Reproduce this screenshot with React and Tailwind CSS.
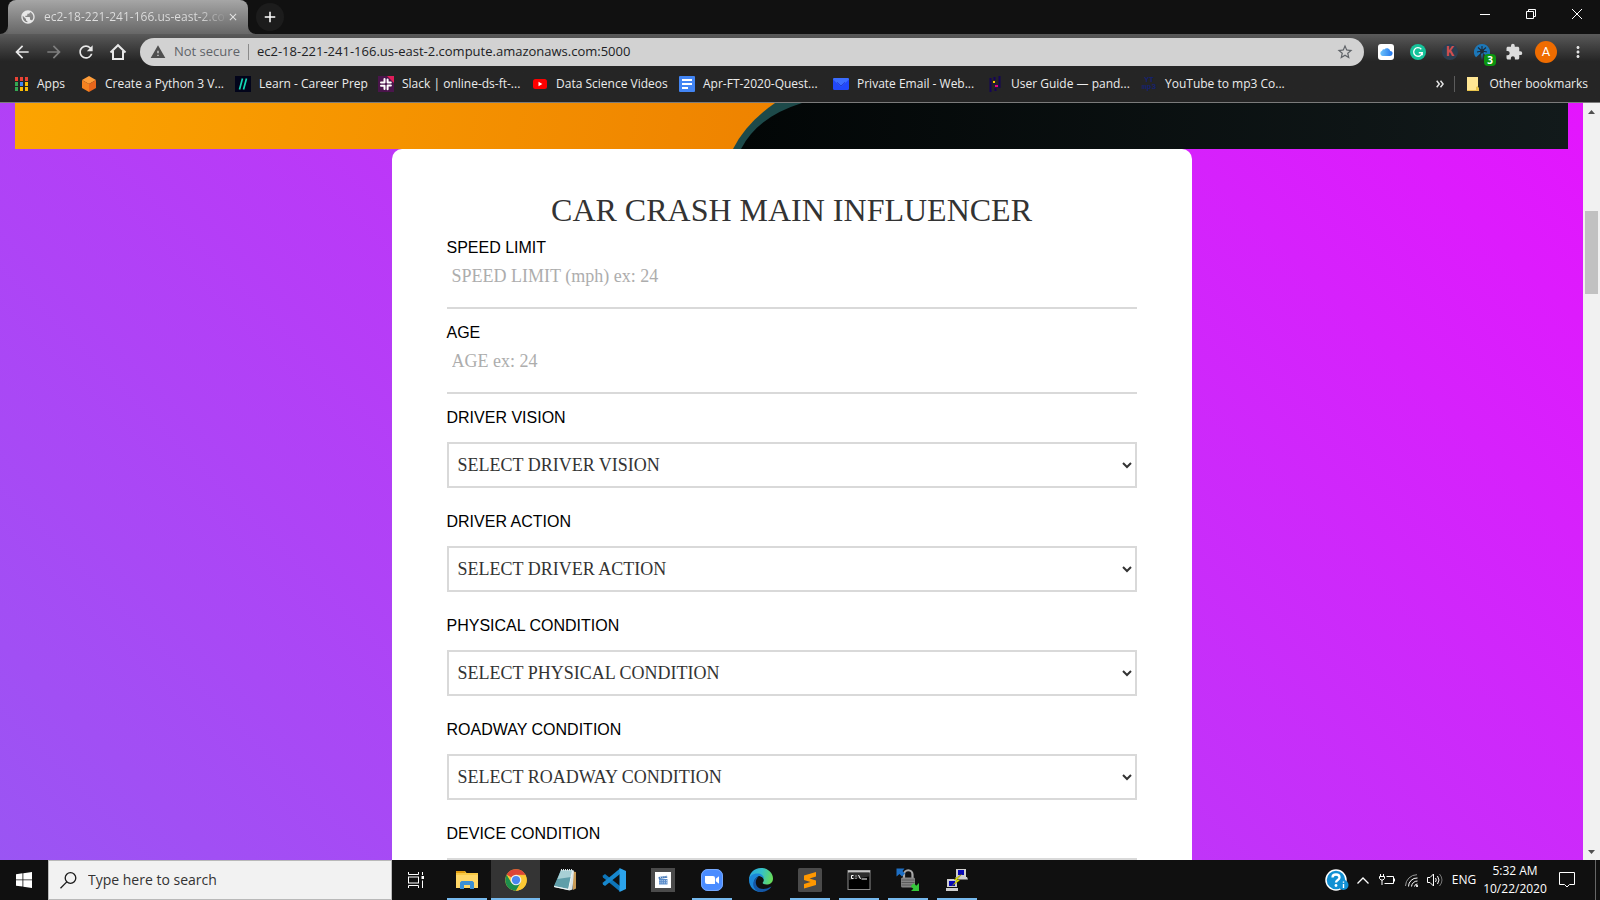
import React from "react";
import {
  MdArrowBack,
  MdArrowForward,
  MdRefresh,
  MdWarning,
  MdStarBorder,
  MdExtension,
  MdMoreVert,
  MdClose,
  MdAdd,
  MdPublic,
} from "react-icons/md";

/* ---------- bookmark icons ---------- */
const AppsIcon = () => (
  <svg width="16" height="16" viewBox="0 0 16 16">
    {["#ea4335", "#ea4335", "#ea4335", "#34a853", "#4285f4", "#fbbc05", "#34a853", "#fbbc05", "#fbbc05"].map((c, i) => (
      <rect key={i} x={2 + (i % 3) * 5} y={1 + Math.floor(i / 3) * 5} width="3" height="4" fill={c} />
    ))}
  </svg>
);
const CubeIcon = () => (
  <svg width="16" height="16" viewBox="0 0 16 16">
    <path d="M8 0 15 4 8 8 1 4z" fill="#ff9d3a" />
    <path d="M1 4 8 8v8l-7-4z" fill="#f58220" />
    <path d="M15 4 8 8v8l7-4z" fill="#e8661b" />
  </svg>
);
const LearnIcon = () => (
  <svg width="16" height="16" viewBox="0 0 16 16">
    <rect width="16" height="16" fill="#02041a" />
    <path d="M7.500 2.500 4.500 13.500M11.500 2.500 8.500 13.500" stroke="#13d8b5" strokeWidth="1.700" />
  </svg>
);
const SlackIcon = () => (
  <svg width="16" height="16" viewBox="0 0 16 16">
    <rect width="16" height="16" fill="#4a154b" />
    <path d="M9 0h7v7z" fill="#e01e5a" />
    <g stroke="#fff" strokeWidth="2" strokeLinecap="round">
      <path d="M6.500 3v3.500M3 6.500h3.400M9.600 3.500v3M9.600 6.500h3.200M6.500 9.700v3.200M3 9.700h3M9.600 9.600v3.700M9.600 9.600h3.300" />
    </g>
    <rect x="7.500" y="7.500" width="1" height="1" fill="#4a154b" />
  </svg>
);
const YoutubeIcon = () => (
  <svg width="16" height="16" viewBox="0 0 16 16">
    <rect x="1" y="3" width="14" height="10" rx="2.500" fill="#f00" />
    <path d="M6.500 5.800v4.400L10.300 8z" fill="#fff" />
  </svg>
);
const DocsIcon = () => (
  <svg width="16" height="16" viewBox="0 0 16 16">
    <rect width="16" height="16" rx="1" fill="#4285f4" />
    <path d="M3 4h10M3 8h10M3 12h6" stroke="#fff" strokeWidth="2" />
  </svg>
);
const MailIcon = () => (
  <svg width="16" height="16" viewBox="0 0 16 16">
    <rect y="2" width="16" height="12" rx="1.500" fill="#2148fb" />
    <path d="M0 3.500C0 2.500.600 2 1.500 2h13c.900 0 1.500.500 1.500 1.500L8.800 10q-.800.700-1.600 0z" fill="#3c6dff" />
    <path d="M4 6.300 8 10l4-3.700" stroke="#1a2fc4" fill="none" strokeWidth=".800" />
  </svg>
);
const PandasIcon = () => (
  <svg width="16" height="16" viewBox="0 0 16 16">
    <path d="M3.500 2v14M12.500 0v12" stroke="#150458" strokeWidth="2" />
    <path d="M7.500 1v3M8.500 12v3M7.500 7.500v1" stroke="#150458" strokeWidth="2" />
    <rect x="6" y="5" width="2" height="2" fill="#ffca00" />
    <rect x="8" y="9" width="3" height="2" fill="#e70488" />
  </svg>
);
const Mp3Icon = () => (
  <span className="flex h-4 w-4 flex-col items-center font-['Liberation_Mono',monospace] text-[8px] leading-[7px] font-bold text-[#16226f]">
    <span>YT</span>
    <span>mp3</span>
  </span>
);
const FolderIcon = () => (
  <svg width="16" height="16" viewBox="0 0 16 16">
    <path d="M2 1h11v10l1 1v3H2z" fill="#ffe694" />
    <path d="M11 15v-4l2-1v2h1v3z" fill="#e9c44c" />
    <path d="M2 14.500h12" stroke="#e9c44c" />
  </svg>
);

const bookmarks = [
  ["Apps", AppsIcon, "w-[68px]"],
  ["Create a Python 3 V...", CubeIcon, "w-[154px]"],
  ["Learn - Career Prep", LearnIcon, "w-[143px]"],
  ["Slack | online-ds-ft-...", SlackIcon, "w-[154px]"],
  ["Data Science Videos", YoutubeIcon, "w-[147px]"],
  ["Apr-FT-2020-Quest...", DocsIcon, "w-[154px]"],
  ["Private Email - Web...", MailIcon, "w-[154px]"],
  ["User Guide — pand...", PandasIcon, "w-[154px]"],
  ["YouTube to mp3 Co...", Mp3Icon, "w-[154px]"],
];

/* ---------- extension icons ---------- */
const CloudExt = () => (
  <svg width="16" height="16" viewBox="0 0 16 16">
    <defs>
      <linearGradient id="cloud" x1="0" x2="1">
        <stop offset="0" stopColor="#6cc3fb" />
        <stop offset="1" stopColor="#2476ec" />
      </linearGradient>
    </defs>
    <rect width="16" height="16" rx="3" fill="#fff" />
    <path d="M4.500 12a2.700 2.700 0 0 1-.400-5.200A2 2 0 0 1 6.300 5.400 3.400 3.400 0 0 1 12.200 7a2.500 2.500 0 0 1-.200 5z" fill="url(#cloud)" />
  </svg>
);
const GExt = () => (
  <svg width="16" height="16" viewBox="0 0 16 16">
    <circle cx="8" cy="8" r="8" fill="#15c39a" />
    <path d="M11.300 5.200A4.300 4.300 0 1 0 12.200 8.800H8.800M12.200 8.500v2.800" stroke="#fff" strokeWidth="1.400" fill="none" />
  </svg>
);
const KExt = () => (
  <span className="flex h-4 w-4 items-center justify-center rounded-full bg-[#2c3e50] font-['Liberation_Mono',monospace] text-[14px] leading-4 font-bold text-[#cf4f4f]">
    K
  </span>
);
const WheelExt = () => (
  <span className="relative block h-4 w-4">
    <svg width="16" height="16" viewBox="0 0 16 16">
      <path d="M8 0a8 8 0 0 1 6 13.300L9 9 8 16 7 9l-5 4.300A8 8 0 0 1 8 0z" fill="#1c77b8" />
      <g stroke="#1e2a36" strokeWidth="1.100">
        <path d="M8 7 4 3.500M8 7V2M8 7l4-3.500M8 7l5 1M8 7 3 8M8 8l-3 4" />
      </g>
      <circle cx="8" cy="7.500" r="2" fill="#1e2a36" />
    </svg>
    <span className="absolute top-[10px] left-[10px] flex h-3 w-3 items-center justify-center rounded-sm bg-[#0b9410] text-[10px] leading-3 font-bold text-white">
      3
    </span>
  </span>
);

/* ---------- taskbar icons ---------- */
const WindowsLogo = () => (
  <svg width="16" height="16" viewBox="0 0 16 16" fill="#fff">
    <path d="M0 2.200 6.500 1.300v6.200H0zM7.300 1.200 16 0v7.500H7.300zM0 8.300h6.500v6.300L0 13.700zM7.300 8.300H16V16l-8.700-1.200z" />
  </svg>
);
const TaskView = () => (
  <svg width="16" height="16" viewBox="0 0 16 16" stroke="#fff" fill="none">
    <path d="M.500 0v2.500h10V0M.500 16v-2.500h10V16" />
    <rect x=".500" y="5" width="10" height="6" />
    <path d="M14.500 0v3M14.500 8.500V16" />
    <rect x="14" y="4.500" width="1.500" height="2" fill="#fff" />
  </svg>
);
const Explorer = () => (
  <svg width="22" height="20" viewBox="0 0 22 20">
    <path d="M0 1h9l1.500 2H22v15H0z" fill="#f8c945" />
    <path d="M0 1h8.500l1 2H0z" fill="#e09b10" />
    <path d="M0 5h22v13H0z" fill="#ffd767" />
    <path d="M4 19v-6.500L5.500 11h11l1.500 1.500V19h-4v-4H8v4z" fill="#3b8fd4" />
  </svg>
);
const Chrome = () => (
  <svg width="22" height="22" viewBox="0 0 48 48">
    <circle cx="24" cy="24" r="23.500" fill="#fcc934" />
    <path d="M24 24 3.600 12.300A23.500 23.500 0 0 1 44.400 12.300H24z" fill="#dc4437" />
    <path d="M3.600 12.300A23.500 23.500 0 0 0 24 47.500L34.200 30 24 24 13.900 30z" fill="#1e8e4c" />
    <path d="M44.400 12.300A23.500 23.500 0 0 1 24 47.500L34.200 30 34 15z" fill="#fcc934" />
    <path d="M24 12.300h20.400" stroke="#dc4437" />
    <circle cx="24" cy="24" r="11.700" fill="#eee" />
    <circle cx="24" cy="24" r="9" fill="#4a86f0" />
  </svg>
);
const Notepad = () => (
  <svg width="24" height="24" viewBox="0 0 24 24">
    <path d="M20 3.500 23 4v16.500l-3 1.500z" fill="#c79a55" />
    <path d="M8.500 2.500H21l-1.500 19-3 1L1 19z" fill="#d9e4e6" />
    <path d="M8 2h11.500l-4 19L1 18z" fill="#5f9ea9" />
    <path d="M8 2h11.500l-1.500 7L4.500 11z" fill="#a8d0d5" />
    <path d="M1 18.500 15.500 21.500l4-19" stroke="#eef6f7" fill="none" />
    <path d="M8 2h11.500" stroke="#dbe6e8" strokeWidth="2" strokeDasharray="1 1" />
  </svg>
);
const VsCode = () => (
  <svg width="24" height="24" viewBox="0 0 24 24">
    <path d="M1 7.500 3 6l15 12v5.500L1 9.500q-.800-1 0-2z" fill="#0e75b8" />
    <path d="M1 16.500 3 18 18 6V.500L1 14.500q-.800 1 0 2z" fill="#1787cd" />
    <path d="M17.500 0 24 3v18l-6.500 3z" fill="#2ba3ec" />
  </svg>
);
const Video = () => (
  <svg width="24" height="24" viewBox="0 0 24 24">
    <rect width="24" height="24" fill="#4b4b4b" />
    <rect x="4" y="4" width="16" height="16" fill="#fff" />
    <path d="m7.500 9 8.500-1.300.300 2-8.500 1.300z" fill="#4377b7" />
    <path d="M8 11h8.500v5.500H8z" fill="#5a8cca" />
    <path d="M8.500 12.700h8M8.500 14.800h8M9 9.500l7-1" stroke="#e8f0fa" strokeWidth=".800" strokeDasharray="1 1.200" />
  </svg>
);
const Zoom = () => (
  <svg width="24" height="24" viewBox="0 0 24 24">
    <rect x="1" y="1" width="22" height="22" rx="7" fill="#4a8cff" />
    <rect x="1.500" y="1.500" width="21" height="21" rx="6.500" fill="none" stroke="#77a9fb" />
    <path d="M5 8h8q2 0 2 2v6H7q-2 0-2-2zM15.800 10.800 19 8.200v7.600l-3.200-2.600z" fill="#fff" />
  </svg>
);
const Edge = () => (
  <svg width="24" height="24" viewBox="0 0 24 24">
    <defs>
      <linearGradient id="edgeTop" x1="0" x2="1" y1=".300" y2=".500">
        <stop offset="0" stopColor="#2aa9e0" />
        <stop offset=".500" stopColor="#35c1c8" />
        <stop offset="1" stopColor="#67dc58" />
      </linearGradient>
    </defs>
    <path d="M0 12C0 5 5 0 12 0s12 5 12 10.500c0 4-3 6-6.500 6-3 0-4.500-1-3.500-2.200C16 12 14 8 9.500 8 4 8 .500 10 0 12z" fill="url(#edgeTop)" />
    <path d="M0 12c0-4 4-6.500 8.500-6.500 4 0 6.500 2.500 6.500 5.500-1-2-3-3-5-3-4 2-6 5-4.500 9.500S11 24 12 24C5 24 0 18.500 0 12z" fill="#1b87d8" />
    <path d="M9.500 9C7 11 6 14 7.500 17.500S14 21.500 18 20.500l4.500-2C20.500 22 16.500 24 12 24c-5 0-9-5-7.500-10C5.500 11 7.500 9.300 9.500 9z" fill="#1457a6" />
  </svg>
);
const Sublime = () => (
  <svg width="24" height="24" viewBox="0 0 24 24">
    <rect width="24" height="24" rx="1.500" fill="#4a4a4a" />
    <path d="M18 4v4.500l-6.500 2L18 12.500V17L6 20.500V16l6.500-2L6 12V7.500z" fill="#ff9800" />
  </svg>
);
const Cmd = () => (
  <svg width="24" height="20" viewBox="0 0 24 20">
    <rect x="1" y=".500" width="22" height="19" fill="#000" stroke="#8b8b8b" />
    <path d="M1 1.500h22" stroke="#c5c5c5" strokeWidth="2" />
    <path d="M2 3h20v3.500L2 10z" fill="#2c2c2c" />
    <path d="M6.500 5.500h-2v3h2M11.500 5l2 4" stroke="#fff" fill="none" />
    <path d="M9 5.500v1M9 7.800v1M14.500 9H20" stroke="#fff" />
  </svg>
);
const Lock = () => (
  <svg width="24" height="24" viewBox="0 0 24 24">
    <path d="M8 11V6.500a4.200 4.200 0 0 1 8.500 0V11" stroke="#a8a8a8" strokeWidth="2.200" fill="none" />
    <rect x="5" y="9.500" width="14" height="10" rx="1.500" fill="#858585" />
    <path d="M5.500 12h13M5.500 14.500h13M5.500 17h13" stroke="#5a5a5a" />
    <path d="M.500.500h8L6.500 3 9 5.500 6 8.500 3.500 6 .500 8.500z" fill="#1d6fc4" />
    <path d="M23 23h-8l2.300-2.300-2.600-2.500 3-2.900 2.600 2.500L23 15z" fill="#35c83a" />
  </svg>
);
const Putty = () => (
  <svg width="24" height="24" viewBox="0 0 24 24">
    <path d="M11 1h10v8H11zM10 9h12l1 2.500H13zM2 11h10v8H2zM1 20h12v3H1z" fill="#cfcfcf" />
    <rect x="13" y="2" width="6" height="5" fill="#0808b8" />
    <rect x="4" y="13" width="6" height="5" fill="#0808b8" />
    <path d="m17 6-8 5.500 3 .800-5 5.500 8-5.500-3-.800z" fill="#f7f700" stroke="#555500" strokeWidth=".400" />
  </svg>
);

const taskApps = [
  ["File Explorer", Explorer, true],
  ["Google Chrome", Chrome, true, true],
  ["Notepad", Notepad, false],
  ["Visual Studio Code", VsCode, false],
  ["Video Editor", Video, false],
  ["Zoom", Zoom, true],
  ["Microsoft Edge", Edge, false],
  ["Sublime Text", Sublime, true],
  ["Command Prompt", Cmd, true],
  ["WinSCP", Lock, true],
  ["PuTTY", Putty, true],
];

const trayBtn = "flex h-full items-center justify-center";

/* ---------- browser chrome ---------- */
function TabStrip() {
  return (
    <div className="flex h-[34px] shrink-0 items-stretch bg-[#111] pl-2">
      <div className="relative flex w-60 items-center rounded-t-lg bg-linear-to-b from-[#a6a6a6] to-[#676767] pr-2 pl-3">
        <svg className="absolute bottom-0 -left-2" width="8" height="8" viewBox="0 0 8 8" fill="#676767">
          <path d="M8 0v8H0a8 8 0 0 0 8-8z" />
        </svg>
        <svg className="absolute -right-2 bottom-0" width="8" height="8" viewBox="0 0 8 8" fill="#676767">
          <path d="M0 0v8h8a8 8 0 0 1-8-8z" />
        </svg>
        <MdPublic className="size-4 shrink-0 text-[#e8e8e8]" />
        <span className="ml-2 flex-1 bg-linear-to-r from-[#dedede] from-85% to-[#8f8f8f] bg-clip-text text-xs whitespace-nowrap text-transparent">
          ec2-18-221-241-166.us-east-2.co
        </span>
        <button aria-label="Close tab" className="flex size-4 shrink-0 items-center justify-center text-[#e3e3e3]">
          <MdClose className="size-3" />
        </button>
      </div>
      <button aria-label="New tab" className="ml-2 flex size-7 items-center justify-center self-center rounded-full bg-[#1c1c1c] text-white">
        <MdAdd className="size-[18px]" />
      </button>
      <div className="ml-auto flex h-7">
        <button aria-label="Minimize" className="flex w-[46px] items-center justify-center">
          <svg width="10" height="10" stroke="#fff"><path d="M0 5.500h10" /></svg>
        </button>
        <button aria-label="Restore" className="flex w-[46px] items-center justify-center">
          <svg width="10" height="10" stroke="#fff" fill="none"><path d="M.500 2.500h7v7h-7zM2.500 2.500v-2h7v7h-2" /></svg>
        </button>
        <button aria-label="Close" className="flex w-[46px] items-center justify-center">
          <svg width="10" height="10" stroke="#fff"><path d="m0 0 10 10M10 0 0 10" /></svg>
        </button>
      </div>
    </div>
  );
}

function Toolbar() {
  const ext = "flex w-8 items-center justify-center";
  return (
    <div className="flex h-9 shrink-0 items-center px-1.5">
      <button aria-label="Back" className="flex w-8 justify-center text-[#e8e8e8]"><MdArrowBack className="size-5" /></button>
      <button aria-label="Forward" className="flex w-8 justify-center text-[#7e7e7e]"><MdArrowForward className="size-5" /></button>
      <button aria-label="Reload" className="flex w-8 justify-center text-[#e8e8e8]"><MdRefresh className="size-5" /></button>
      <button aria-label="Home" className="flex w-8 justify-center text-[#e8e8e8]">
        <svg width="18" height="18" viewBox="0 0 18 18" fill="none" stroke="currentColor" strokeWidth="2">
          <path d="M1.500 9.500 9 2.200l7.500 7.300M4 8v8h10V8" />
        </svg>
      </button>
      <div className="mx-1.5 flex h-7 flex-1 items-center rounded-full bg-[#d2d2d2] px-2.5">
        <MdWarning className="size-4 shrink-0 text-[#4f4f4f]" />
        <span className="ml-2 shrink-0 text-[13px] whitespace-nowrap text-[#5f6368]">Not secure</span>
        <span className="mx-2 h-4 w-px shrink-0 bg-[#8a8a8a]" />
        <input
          aria-label="Address"
          className="min-w-0 flex-1 bg-transparent text-[13px] text-[#202124] outline-none"
          defaultValue="ec2-18-221-241-166.us-east-2.compute.amazonaws.com:5000"
        />
        <button aria-label="Bookmark this page" className="text-[#5f6368]"><MdStarBorder className="size-[18px]" /></button>
      </div>
      <button aria-label="iCloud" className={ext}><CloudExt /></button>
      <button aria-label="Grammarly" className={ext}><GExt /></button>
      <button aria-label="K extension" className={ext}><KExt /></button>
      <button aria-label="Tracker extension" className={ext}><WheelExt /></button>
      <button aria-label="Extensions" className={ext}><MdExtension className="size-[18px] text-[#dcdcdc]" /></button>
      <button aria-label="Profile" className={ext}>
        <span className="flex size-[22px] items-center justify-center rounded-full bg-[#ef6c00] font-[Roboto,sans-serif] text-[13px] text-white">A</span>
      </button>
      <button aria-label="Menu" className={ext}><MdMoreVert className="size-[18px] text-[#e3e3e3]" /></button>
    </div>
  );
}

function BookmarksBar() {
  return (
    <div className="flex h-8 shrink-0 items-center pb-1 pl-[13px] text-xs text-[#ececec]">
      {bookmarks.map(([label, Icon, width]) => (
        <a key={label} href="#" className={`flex shrink-0 items-center gap-2 whitespace-nowrap ${width}`}>
          <Icon />
          <span>{label}</span>
        </a>
      ))}
      <button aria-label="More bookmarks" className="ml-auto">
        <svg width="8" height="8" viewBox="0 0 8 8" fill="none" stroke="#e3e3e3" strokeWidth="1.500"><path d="m.700.800 2.600 3.200-2.600 3.200M4.500.800 7.100 4 4.500 7.200" /></svg>
      </button>
      <span className="mx-2.5 h-4 w-px bg-[#5c5c5c]" />
      <a href="#" className="flex items-center gap-2 pr-3 whitespace-nowrap">
        <FolderIcon />
        <span>Other bookmarks</span>
      </a>
    </div>
  );
}

/* ---------- page ---------- */
function Banner() {
  return (
    <div className="mx-[15px] h-[46px] shrink-0 overflow-hidden">
      <svg className="block h-full w-full" viewBox="0 0 1553 46" preserveAspectRatio="none">
        <defs>
          <linearGradient id="orange" gradientUnits="userSpaceOnUse" x1="0" y1="0" x2="760" y2="120">
            <stop offset="0" stopColor="#fca400" />
            <stop offset="1" stopColor="#ee8200" />
          </linearGradient>
          <linearGradient id="dark" x1="0" x2="1">
            <stop offset="0" stopColor="#020606" />
            <stop offset="1" stopColor="#121a1b" />
          </linearGradient>
        </defs>
        <rect width="780" height="46" fill="url(#orange)" />
        <path d="M718 46Q731 20 760 0H1553V46z" fill="#1d4a4a" />
        <path d="M726 46Q742 14 787 0H1553V46z" fill="url(#dark)" />
      </svg>
    </div>
  );
}

const labelCls = "block font-['Liberation_Sans',Arial,sans-serif] text-base leading-6 text-black";

function TextField({ id, label, placeholder }) {
  return (
    <div className="mb-3">
      <label htmlFor={id} className={labelCls}>{label}</label>
      <input
        id={id}
        placeholder={placeholder}
        className="block h-[49px] w-full border-b-2 border-[#d9d9d9] bg-white px-[5px] pb-3.5 text-lg leading-5 text-[#333] outline-none placeholder:text-[#adadad]"
      />
    </div>
  );
}

function SelectField({ id, label, option }) {
  return (
    <div className="mb-[22px]">
      <label htmlFor={id} className={labelCls}>{label}</label>
      <select id={id} className="mt-3 block h-[46px] w-full border-2 border-[#d9d9d9] bg-white px-[5px] text-lg text-[#333]">
        <option>{option}</option>
      </select>
    </div>
  );
}

function FormCard() {
  return (
    <form className="mx-auto w-full max-w-[800px] shrink-0 rounded-[10px] bg-white px-[55px] pt-[45px] font-['Liberation_Serif','Times_New_Roman',serif]">
      <h1 className="mb-2.5 text-center text-[32px] leading-8 text-[#333]">CAR CRASH MAIN INFLUENCER</h1>
      <TextField id="speed" label="SPEED LIMIT" placeholder="SPEED LIMIT (mph) ex: 24" />
      <TextField id="age" label="AGE" placeholder="AGE ex: 24" />
      <SelectField id="vision" label="DRIVER VISION" option="SELECT DRIVER VISION" />
      <SelectField id="action" label="DRIVER ACTION" option="SELECT DRIVER ACTION" />
      <SelectField id="physical" label="PHYSICAL CONDITION" option="SELECT PHYSICAL CONDITION" />
      <SelectField id="roadway" label="ROADWAY CONDITION" option="SELECT ROADWAY CONDITION" />
      <SelectField id="device" label="DEVICE CONDITION" option="SELECT DEVICE CONDITION" />
    </form>
  );
}

function ScrollBar() {
  return (
    <div className="flex w-[17px] shrink-0 flex-col items-center bg-[#f1f1f1]">
      <svg width="17" height="17" viewBox="0 0 17 17"><path d="m5 11 3.500-4 3.500 4z" fill="#505050" /></svg>
      <div className="flex w-full flex-1 flex-col px-0.5">
        <div className="grow-[91]" />
        <div className="grow-[83] bg-[#c1c1c1]" />
        <div className="grow-[549]" />
      </div>
      <svg width="17" height="17" viewBox="0 0 17 17"><path d="m5 7 3.500 4L12 7z" fill="#505050" /></svg>
    </div>
  );
}

/* ---------- taskbar ---------- */
function Taskbar() {
  return (
    <div className="flex h-10 shrink-0 items-stretch bg-[#101010] text-white">
      <button aria-label="Start" className="flex w-12 items-center justify-center"><WindowsLogo /></button>
      <label className="flex w-[344px] items-center border border-[#b9b9b9] bg-[#f2f2f2] pl-[11px]">
        <svg width="17" height="17" viewBox="0 0 17 17" fill="none" stroke="#1b1b1b" strokeWidth="1.300">
          <circle cx="10.500" cy="6" r="5.300" />
          <path d="M6.800 9.900.500 16.300" />
        </svg>
        <input
          aria-label="Search"
          placeholder="Type here to search"
          className="ml-[11px] min-w-0 flex-1 bg-transparent text-sm outline-none placeholder:text-[#333]"
        />
      </label>
      <button aria-label="Task View" className="mr-0.5 flex w-12 items-center justify-center"><TaskView /></button>
      {taskApps.map(([name, Icon, running, active]) => (
        <button
          key={name}
          aria-label={name}
          className={`relative flex w-[49px] items-center justify-center ${active ? "bg-[#343434]" : ""}`}
        >
          <Icon />
          {running && <span className={`absolute bottom-0 h-0.5 bg-[#76b9ed] ${active ? "w-full" : "w-10"}`} />}
        </button>
      ))}
      <div className="ml-auto flex items-center">
        <button aria-label="Help" className={`${trayBtn} w-7`}>
          <svg width="24" height="24" viewBox="0 0 24 24">
            <circle cx="11" cy="12" r="10" fill="#1290d3" stroke="#fff" strokeWidth="1.500" />
            <path d="M7.500 9.500c0-4 7-4 7 0 0 2.500-3.500 2.500-3.500 5" stroke="#fff" strokeWidth="2.300" fill="none" />
            <circle cx="11" cy="17.500" r="1.400" fill="#fff" />
            <circle cx="18.500" cy="17" r="5" fill="#1290d3" />
            <path d="M18.500 16v4M18.500 13.500v1.200" stroke="#fff" strokeWidth="1.400" />
          </svg>
        </button>
        <button aria-label="Show hidden icons" className={`${trayBtn} w-6`}>
          <svg width="12" height="7" fill="none" stroke="#fff" strokeWidth="1.300"><path d="m.500 6.500 5.500-5.500 5.500 5.500" /></svg>
        </button>
        <button aria-label="Battery" className={`${trayBtn} w-6`}>
          <svg width="16" height="12" fill="none" stroke="#fff">
            <path d="M7.500 2.500h7v7h-9M15.500 4.500v3M1.500 0v2M4.500 0v2M.500 2.500h5v2l-1.500 1.500H2L.500 4.500zM3 6v5" />
          </svg>
        </button>
        <button aria-label="Network" className={`${trayBtn} w-6`}>
          <svg width="13" height="13" viewBox="0 0 13 13" fill="none" stroke="#fff">
            <path d="M.500 12A11.500 11.500 0 0 1 12 .700" stroke="#999" />
            <path d="M3.500 12.500A8.500 8.500 0 0 1 12.500 4M6.500 12.500a6 6 0 0 1 6-5.500M9.500 12.500a3 3 0 0 1 3-2.500" />
            <circle cx="12" cy="12" r=".700" fill="#fff" />
          </svg>
        </button>
        <button aria-label="Volume" className={`${trayBtn} w-6`}>
          <svg width="16" height="14" viewBox="0 0 16 14" fill="none" stroke="#fff">
            <path d="M.500 4.500H3L6.500 1v12L3 9.500H.500zM8.500 5q1.500 2 0 4M10.500 3q3 4 0 8" />
            <path d="M12.500 1q5 6 0 12" stroke="#777" />
          </svg>
        </button>
        <span className="w-[34px] text-center text-xs">ENG</span>
        <span className="flex w-[68px] flex-col items-center text-xs leading-[18px] whitespace-nowrap">
          <span>5:32 AM</span>
          <span>10/22/2020</span>
        </span>
        <button aria-label="Notifications" className={`${trayBtn} mr-2.5 w-9`}>
          <svg width="16" height="16" viewBox="0 0 16 16" fill="none" stroke="#fff"><path d="M.500.500h15v12h-5L8 15l-2.500-2.500h-5z" /></svg>
        </button>
        <span className="mr-1 h-full w-px bg-[#666]" />
      </div>
    </div>
  );
}

export default function App() {
  return (
    <div className="flex h-screen flex-col overflow-hidden font-['Open_Sans','Segoe_UI',sans-serif]">
      <header>
        <TabStrip />
        <div className="border-b border-[#7b7b7b] bg-[#252525] bg-linear-to-b from-[#5a5a5a] from-0% to-[#252525] to-40%">
          <Toolbar />
          <BookmarksBar />
        </div>
      </header>
      <div className="flex min-h-0 flex-1">
        <main className="flex min-w-0 flex-1 flex-col overflow-hidden bg-linear-[45deg] from-[#9a55f3] to-[#e415fe]">
          <Banner />
          <FormCard />
        </main>
        <ScrollBar />
      </div>
      <Taskbar />
    </div>
  );
}
